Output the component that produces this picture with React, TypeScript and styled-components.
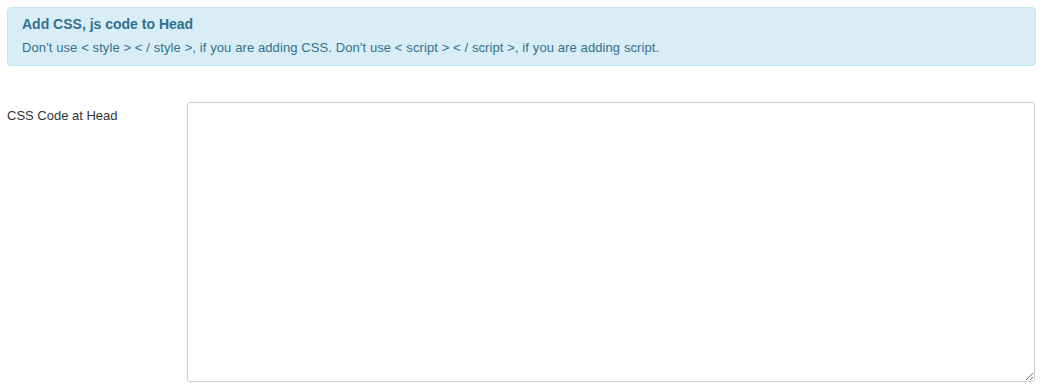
import React from "react";
import styled, { createGlobalStyle } from "styled-components";

const Global = createGlobalStyle`
  html, body { margin: 0; padding: 0; background: #fff; }
  body { font-family: "Liberation Sans", Arial, sans-serif; color: #333; }
  * { box-sizing: border-box; }
`;

const Page = styled.div`
  padding: 7px 7px 0 7px;
  width: 1042px;
`;

const Alert = styled.div`
  background: #d9edf7;
  border: 1px solid #bce8f1;
  border-radius: 4px;
  color: #31708f;
  padding: 7px 14px 10px 14px;
  height: 59px;
  width: 1029px;
`;

const AlertTitle = styled.div`
  font-weight: bold;
  font-size: 14px;
  line-height: 18px;
`;

const AlertText = styled.div`
  font-size: 13px;
  line-height: 16px;
  margin-top: 7px;
  letter-spacing: 0.1px;
`;

const FormRow = styled.div`
  display: flex;
  margin-top: 36px;
`;

const Label = styled.label`
  width: 180px;
  font-size: 13px;
  line-height: 16px;
  padding-top: 6px;
  color: #333;
`;

const TextArea = styled.textarea`
  width: 849px;
  height: 280px;
  border: 1px solid #ccc;
  border-radius: 3px;
  resize: both;
  padding: 6px 10px;
  font-family: "Liberation Sans", Arial, sans-serif;
  font-size: 13px;
  outline: none;
  display: block;
`;

export default function App() {
  return (
    <>
      <Global />
      <Page>
        <Alert>
          <AlertTitle>Add CSS, js code to Head</AlertTitle>
          <AlertText>
            Don't use &lt; style &gt; &lt; / style &gt;, if you are adding CSS. Don't use &lt; script &gt; &lt; / script &gt;, if you are adding script.
          </AlertText>
        </Alert>
        <FormRow>
          <Label>CSS Code at Head</Label>
          <TextArea />
        </FormRow>
      </Page>
    </>
  );
}
